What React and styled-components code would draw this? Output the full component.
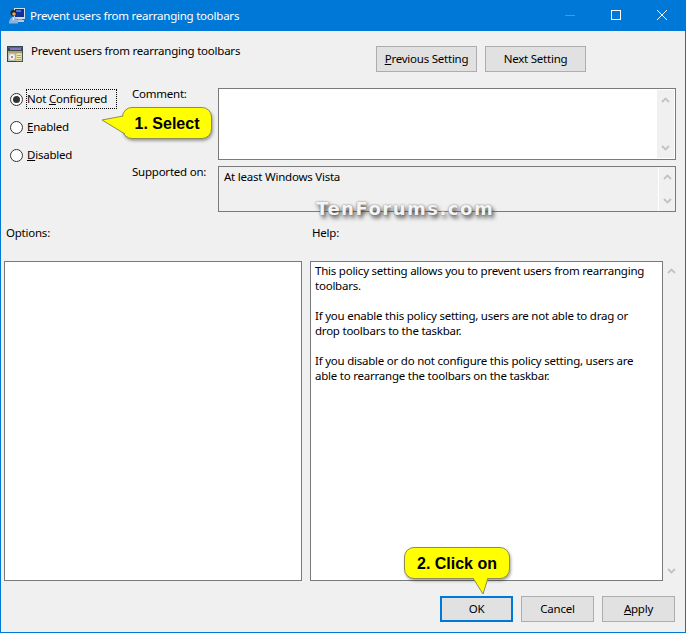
import styled, { createGlobalStyle } from "styled-components";

const Global = createGlobalStyle`
  html, body { margin: 0; padding: 0; background: #f0f0f0; }
  * { box-sizing: border-box; }
`;

function App() {
  return (
    <Window>
      <Global />
      <TitleBar>
        <AppIcon />
        <TitleText>Prevent users from rearranging toolbars</TitleText>
        <WindowControls>
          <ControlSlot>
            <svg width="12" height="12" viewBox="0 0 12 12"><path d="M1 5.5h10" stroke="#3f9ae4" fill="none" /></svg>
          </ControlSlot>
          <ControlSlot>
            <svg width="12" height="12" viewBox="0 0 12 12"><rect x="1.5" y="0.5" width="9" height="9" stroke="#fff" fill="none" /></svg>
          </ControlSlot>
          <ControlSlot>
            <svg width="12" height="12" viewBox="0 0 12 12"><path d="M1 0l10 10M11 0L1 10" stroke="#fff" fill="none" /></svg>
          </ControlSlot>
        </WindowControls>
      </TitleBar>

      <Body>
        <HeaderRow>
          <PolicyIcon />
          <HeaderText>Prevent users from rearranging toolbars</HeaderText>
          <NavButtons>
            <Button $w={101}><u>P</u>revious Setting</Button>
            <Button $w={101}>Next Setting</Button>
          </NavButtons>
        </HeaderRow>

        <TopGrid>
          <RadioGroup>
            <RadioRow>
              <Radio $checked />
              <FocusLabel>Not <u>C</u>onfigured</FocusLabel>
            </RadioRow>
            <RadioRow>
              <Radio />
              <RadioLabel><u>E</u>nabled</RadioLabel>
            </RadioRow>
            <RadioRow>
              <Radio />
              <RadioLabel><u>D</u>isabled</RadioLabel>
            </RadioRow>
          </RadioGroup>

          <Fields>
            <FieldLabel>Comment:</FieldLabel>
            <CommentBox>
              <ScrollTrack />
            </CommentBox>
            <FieldLabel>Supported on:</FieldLabel>
            <SupportedBox>
              <SupportedText>At least Windows Vista</SupportedText>
              <ScrollTrack $divider />
            </SupportedBox>
          </Fields>
        </TopGrid>

        <PaneLabels>
          <span>Options:</span>
          <span>Help:</span>
        </PaneLabels>

        <Panes>
          <OptionsPane />
          <HelpPane>
            <p>This policy setting allows you to prevent users from rearranging toolbars.</p>
            <p>If you enable this policy setting, users are not able to drag or drop toolbars to the taskbar.</p>
            <p>If you disable or do not configure this policy setting, users are able to rearrange the toolbars on the taskbar.</p>
          </HelpPane>
          <PaneScroll>
            <Chevron />
            <Chevron $down />
          </PaneScroll>
        </Panes>

        <Footer>
          <Button $w={73} $default>OK</Button>
          <Button $w={73}>Cancel</Button>
          <Button $w={73}><u>A</u>pply</Button>
        </Footer>
      </Body>

      <Watermark>TenForums.com</Watermark>
      <SelectCallout>
        <CalloutBody $w={90} $nudge={1}>1. Select</CalloutBody>
        <SelectTail width="26" height="26" viewBox="0 0 26 26">
          <path d="M22 5 L1 9 L24 23" fill="#ffff00" stroke="#8c8c5a" />
        </SelectTail>
      </SelectCallout>
      <ClickCallout>
        <CalloutBody $w={106} $nudge={2}>2. Click on</CalloutBody>
        <ClickTail width="22" height="20" viewBox="0 0 22 20">
          <path d="M2 0 L12 16 L17 0" fill="#ffff00" stroke="#8c8c5a" />
        </ClickTail>
      </ClickCallout>
    </Window>
  );
}

function AppIcon() {
  return (
    <svg width="16" height="16" viewBox="0 0 16 16" style={{ flex: "none" }}>
      <rect x="5" y="0" width="11" height="11" fill="#d5dbe4" />
      <rect x="6" y="1" width="9" height="8" fill="#12309a" />
      <rect x="7" y="2" width="5" height="2" fill="#3d7be0" />
      <rect x="9" y="11" width="4" height="1" fill="#8f9db2" />
      <rect x="7" y="12" width="8" height="2" fill="#bcc8d8" />
      <circle cx="4.5" cy="5" r="3" fill="#2a2318" />
      <circle cx="5" cy="6" r="1.8" fill="#d9a468" />
      <path d="M0 15.5c0-4 2-6.5 4.5-6.5S9 11.5 9 15.5z" fill="#8fb2dc" />
      <path d="M3.5 9.5h2L4.5 13z" fill="#f0f0f0" />
    </svg>
  );
}

function PolicyIcon() {
  return (
    <svg width="16" height="16" viewBox="0 0 16 16" style={{ flex: "none" }}>
      <rect x="0" y="0" width="16" height="16" fill="#2f4a50" />
      <rect x="1" y="1" width="14" height="1" fill="#2a7d84" />
      <rect x="3" y="2" width="11" height="2" fill="#8a72b8" />
      <rect x="1" y="5" width="14" height="2" fill="#b9a06a" />
      <rect x="1" y="7" width="14" height="8" fill="#c2c8c0" />
      <circle cx="5" cy="11" r="3.6" fill="#f2f0ee" stroke="#8a8f8a" strokeWidth="0.5" />
      <circle cx="5" cy="11" r="1" fill="#6f7570" />
      <rect x="9" y="7" width="6" height="8" fill="#f4e8b0" stroke="#8d8a62" strokeWidth="0.5" />
      <path d="M10 9.5h4M10 11.5h4M10 13.5h4" stroke="#a58f4a" strokeWidth="0.8" />
    </svg>
  );
}

const Window = styled.div`
  position: relative;
  width: 686px;
  height: 633px;
  border: 1px solid #0078d7;
  background: #f0f0f0;
  overflow: hidden;
  font-family: "Noto Sans", sans-serif;
  font-size: 11.5px;
  letter-spacing: -0.23px;
  color: #000;
  display: flex;
  flex-direction: column;
`;

const TitleBar = styled.div`
  height: 30px;
  background: #0078d7;
  display: flex;
  align-items: center;
  padding-left: 8px;
  flex: none;
`;

const TitleText = styled.span`
  margin: -1px 0 0 5px;
  color: #fff;
  flex: 1;
`;

const WindowControls = styled.div`
  display: flex;
`;

const ControlSlot = styled.div`
  width: 46px;
  height: 30px;
  display: flex;
  align-items: center;
  justify-content: center;
`;

const Body = styled.div`
  flex: 1;
  display: flex;
  flex-direction: column;
  padding: 0 5px 10px 3px;
`;

const HeaderRow = styled.div`
  display: flex;
  align-items: flex-start;
  padding: 15px 0 0 3px;
  height: 57px;
`;

const HeaderText = styled.span`
  margin-left: 8px;
  margin-top: -3px;
  flex: 1;
`;

const NavButtons = styled.div`
  display: flex;
  gap: 8px;
  margin-right: 94px;
`;

const Button = styled.div`
  width: ${(p) => p.$w}px;
  height: 26px;
  flex: none;
  display: flex;
  align-items: center;
  justify-content: center;
  padding-bottom: 2px;
  background: #e1e1e1;
  border: ${(p) => (p.$default ? "2px solid #0078d7" : "1px solid #adadad")};
  white-space: pre;
`;

const TopGrid = styled.div`
  display: flex;
  height: 124px;
`;

const RadioGroup = styled.div`
  width: 128px;
  flex: none;
  display: flex;
  flex-direction: column;
  gap: 8px;
  padding: 1px 0 0 6px;
`;

const RadioRow = styled.div`
  height: 20px;
  display: flex;
  align-items: center;
`;

const Radio = styled.span`
  width: 13px;
  height: 13px;
  flex: none;
  border: 1px solid #333;
  border-radius: 50%;
  background: #fff;
  display: flex;
  align-items: center;
  justify-content: center;
  &::after {
    content: "";
    width: 7px;
    height: 7px;
    border-radius: 50%;
    background: ${(p) => (p.$checked ? "#333" : "transparent")};
  }
`;

const RadioLabel = styled.span`
  margin-left: 4px;
  padding-bottom: 2px;
`;

const FocusLabel = styled.span`
  margin-left: 3px;
  height: 20px;
  width: 91px;
  padding: 0 0 2px 1px;
  display: flex;
  align-items: center;
  white-space: pre;
  outline: 1px dotted #000;
  outline-offset: -1px;
`;

const Fields = styled.div`
  display: grid;
  grid-template-columns: 86px 458px;
  grid-template-rows: 72px 46px;
  row-gap: 6px;
`;

const FieldLabel = styled.span`
  line-height: 14px;
  margin-top: -1px;
`;

const CommentBox = styled.div`
  background: #fff;
  border: 1px solid #7a7a7a;
  display: flex;
  justify-content: flex-end;
  padding: 1px;
`;

const SupportedBox = styled.div`
  background: #f0f0f0;
  border: 1px solid #7a7a7a;
  display: flex;
  justify-content: space-between;
`;

const SupportedText = styled.span`
  padding: 2px 0 0 5px;
`;

const ChevronIcon = styled.svg`
  display: block;
`;

function Chevron({ $down }) {
  return (
    <ChevronIcon width="9" height="6" viewBox="0 0 9 6">
      <path d={$down ? "M1 1l3.5 3.5L8 1" : "M1 5l3.5-3.5L8 5"} stroke="#c2c2c2" strokeWidth="1.8" fill="none" />
    </ChevronIcon>
  );
}

const Track = styled.div`
  width: 17px;
  background: #f0f0f0;
  display: flex;
  flex-direction: column;
  justify-content: space-between;
  align-items: center;
  padding: 7px 0;
  border-left: ${(p) => (p.$divider ? "1px solid #fff" : "none")};
`;

function ScrollTrack({ $divider }) {
  return (
    <Track $divider={$divider}>
      <Chevron />
      <Chevron $down />
    </Track>
  );
}

const PaneLabels = styled.div`
  display: grid;
  grid-template-columns: 306px 1fr;
  padding: 14px 0 0 2px;
  height: 49px;
  line-height: 14px;
`;

const Panes = styled.div`
  display: flex;
  height: 320px;
`;

const OptionsPane = styled.div`
  width: 298px;
  flex: none;
  background: #fff;
  border: 1px solid #7a7a7a;
  margin-right: 8px;
`;

const HelpPane = styled.div`
  width: 353px;
  flex: none;
  background: #fff;
  border: 1px solid #7a7a7a;
  padding: 1px 10px 1px 4px;
  line-height: 15px;
  p {
    margin: 0 0 15px;
  }
`;

const PaneScroll = styled.div`
  width: 17px;
  flex: none;
  display: flex;
  flex-direction: column;
  justify-content: space-between;
  align-items: center;
  padding: 7px 0;
`;

const Footer = styled.div`
  display: flex;
  justify-content: flex-end;
  gap: 8px;
  margin-top: 15px;
  padding-right: 5px;
`;

const Watermark = styled.div`
  position: absolute;
  left: 315px;
  top: 197px;
  font-family: "DejaVu Sans", sans-serif;
  font-weight: 700;
  font-size: 18px;
  letter-spacing: 1.5px;
  color: #f4f4f4;
  text-shadow: 2px 3px 4px #444, 0 0 2px #777;
`;

const SelectCallout = styled.div`
  position: absolute;
  left: 121px;
  top: 106px;
`;

const SelectTail = styled.svg`
  position: absolute;
  left: -21px;
  top: 4px;
`;

const CalloutBody = styled.div`
  position: relative;
  width: ${(p) => p.$w}px;
  height: 32px;
  padding-top: ${(p) => p.$nudge}px;
  background: #ffff00;
  border: 1px solid #8c8c5a;
  border-radius: 10px;
  box-shadow: 1px 2px 3px rgba(0, 0, 0, 0.35);
  display: flex;
  align-items: center;
  justify-content: center;
  font-family: "Liberation Sans", sans-serif;
  font-weight: 700;
  font-size: 16px;
  letter-spacing: 0;
`;

const ClickCallout = styled.div`
  position: absolute;
  left: 403px;
  top: 546px;
  display: flex;
  flex-direction: column;
`;

const ClickTail = styled.svg`
  margin: -1px 0 0 67px;
  position: relative;
`;

export default App;
